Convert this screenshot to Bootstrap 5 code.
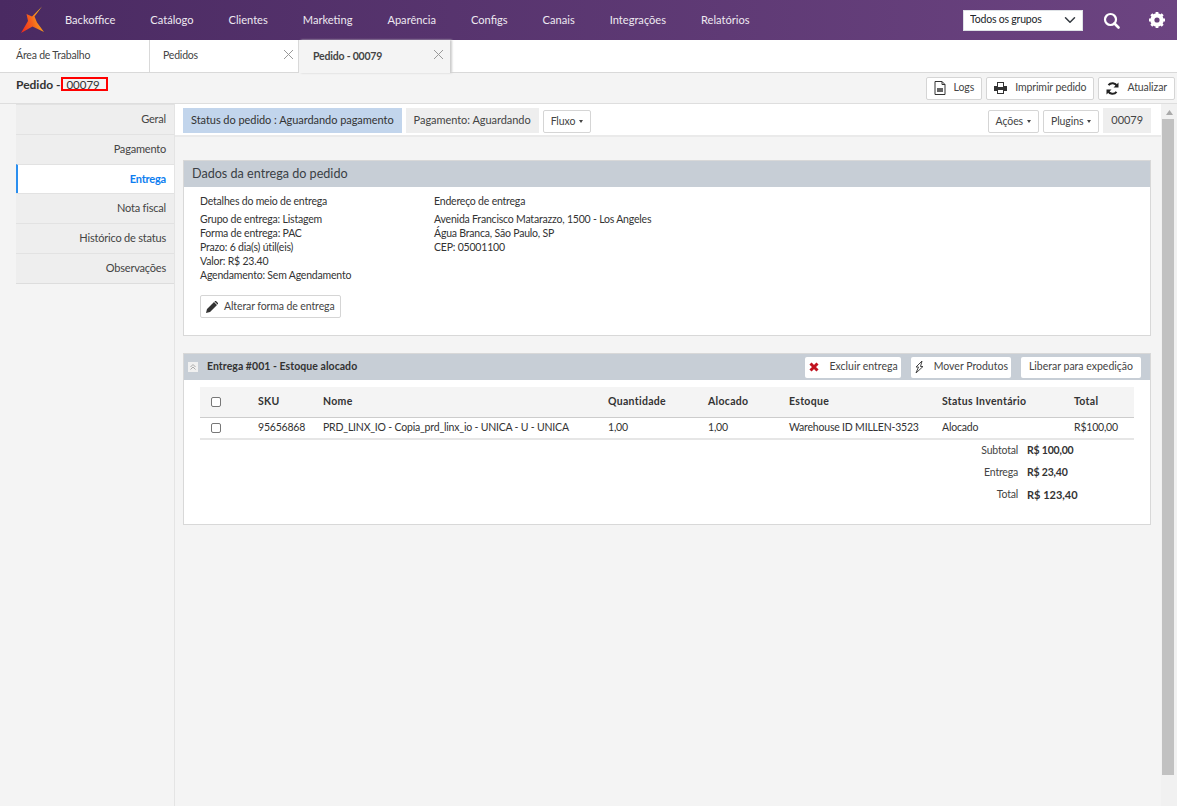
<!DOCTYPE html>
<html lang="pt-BR">

<head>
    <meta charset="UTF-8" />
    <meta name="viewport" content="width=device-width, initial-scale=1.0" />
    <link href="https://cdn.jsdelivr.net/npm/bootstrap@5.3.0/dist/css/bootstrap.min.css" rel="stylesheet">
    <title>Pedido - 00079</title>
    <style>
        html, body { height: 100%; overflow: hidden; }
        body { background: #f4f4f4; font-family: "Lato", "Noto Sans", sans-serif; font-size: 10.5px; letter-spacing: -.2px; color: #333; }
        .topo { height: 40px; background: linear-gradient(90deg, #4a2a62, #6c4481); color: #f1edf4; letter-spacing: 0; }
        .topo-logo { width: 65px; padding-left: 19px; }
        .topo-link { color: #eee9f1; font-size: 11.1px; text-decoration: none; margin-right: 35px; }
        .grupo-select { width: 120px; height: 21px; font-size: 10.5px; letter-spacing: -.2px; padding: 0 6px; border-radius: 0; background-position: right 4px center; margin-right: 20px; }
        .lupa { margin-right: 28px; }
        .engrenagem { margin-right: 11px; }
        .abas { height: 33px; background: #fff; border-bottom: 1px solid #d9d9d9; }
        .aba { width: 149px; height: 32px; padding: 0 13px; border-right: 1px solid #d9d9d9; position: relative; color: #444; }
        .aba-inicio { width: 150px; padding-left: 16px; }
        .aba-ativa { background: #f4f4f4; font-weight: 700; box-shadow: 2px 0 2px #ccc; height: 33px; border: 0; padding-left: 14px; width: 151px; }
        .aba-fechar { position: absolute; right: 4px; top: 9px; width: 11px; height: 11px; }
        .aba-ativa .aba-fechar { right: 6px; }
        .titulo-linha { height: 31px; padding: 0 2px 0 16px; border-bottom: 1px solid #dedede; }
        .titulo-txt { font-size: 12px; font-weight: 700; padding-bottom: 7px; letter-spacing: 0; }
        .marca-vermelha { border: 2px solid #f00; width: 47px; height: 14px; line-height: 12px; font-size: 11.5px; font-weight: 400; padding-left: 3px; display: inline-block; margin-left: -2px; }
        .btn-mini { background: #fff; border: 1px solid #d5d5d5; border-radius: 2px; font-size: 10.5px; letter-spacing: -.1px; color: #444; height: 23px; padding: 0 7px; display: inline-flex; align-items: center; gap: 8px; }
        .btn-alterar { padding: 0 5px; gap: 6px; }
        .corpo { height: 702px; }
        .lateral { width: 174px; padding-left: 16px; flex: none; }
        .lateral-lista { border-bottom: 1px solid #ddd; }
        .lateral-item { height: 29.8px; background: #eee; border-top: 1px solid #e2e2e2; text-align: right; padding-right: 8px; line-height: 28px; font-size: 11px; color: #444; }
        .lateral-item.sel { background: #fff; color: #0d7ef0; font-weight: 700; border-left: 2px solid #2b8fef; }
        .principal { border-left: 1px solid #e4e4e4; }
        .barra-acoes { height: 33px; background: #fff; border-bottom: 2px solid #eaeaea; padding: 4px 10px 0 8px; }
        .selo { height: 25px; padding: 0 8px; display: flex; align-items: center; font-size: 11px; letter-spacing: -.05px; color: #444; background: #eee; }
        .selo-azul { background: #c2d5ec; color: #333; }
        .btn-seta { margin-top: 2px; }
        .seta { width: 0; height: 0; border: 2px solid transparent; border-top: 3px solid #444; border-bottom: 0; }
        .painel { background: #fff; border: 1px solid #d8d8d8; margin: 0 10px 17px 8px; }
        .painel-entrega { margin-top: 23px; }
        .painel-topo { background: #c7ced6; height: 26px; padding: 0 9px 0 8px; }
        .painel-titulo { font-size: 12.6px; letter-spacing: 0; color: #3a3f45; }
        .titulo-entrega { letter-spacing: .05px; margin-left: 1px; }
        .dados-linha { line-height: 14px; padding: 7px 16px 0; }
        .dados-cab { margin-bottom: 4px; }
        .btn-area { padding: 13px 16px 17px; }
        .col-meio { width: 234px; }
        .btn-branco { background: #fff; border: 0; height: 21px; border-radius: 2px; font-size: 10.5px; letter-spacing: 0; color: #444; display: inline-flex; align-items: center; padding: 0 8px; }
        .btn-icone { padding: 0 3px 0 4px; }
        .btn-icone svg { margin-right: 11px; }
        .btn-mover svg { margin-right: 10px; }
        .grupo-btns { gap: 10px; }
        .tabela-pedido { width: 934px; margin: 7px 0 0 16px; }
        .tabela-pedido th, .tabela-pedido td { padding: 0; font-size: 10.5px; color: #333; }
        .tabela-pedido th { letter-spacing: .3px; }
        .tabela-pedido thead tr { height: 30px; background: #f4f4f4; border-bottom: 1px solid #ccc; }
        .tabela-pedido tbody tr { height: 22px; border-bottom: 2px solid #e6e6e6; }
        .caixinha { width: 10px; height: 10px; border: 1px solid #777; border-radius: 2px; display: block; margin-left: 11px; background: #fff; }
        .totais { width: 934px; margin-left: 16px; padding-bottom: 18px; }
        .totais-linha { height: 22px; align-items: center; }
        .totais-rot { width: 827px; text-align: right; padding-right: 9px; color: #444; }
        .total-forte { font-size: 11px; letter-spacing: 0; }
        .rolagem { width: 16px; flex: none; background: #f1f1f1; }
        .rolagem-seta { height: 15px; text-align: center; }
        .rolagem-polegar { height: 656px; background: #c1c1c1; width: 12px; margin-left: 1px; }
    </style>
</head>

<body>
    <!-- Barra do topo -->
    <nav class="topo d-flex align-items-center">
        <div class="topo-logo d-flex">
            <svg width="26" height="28" viewBox="18 5 26 28">
                <defs>
                    <linearGradient id="logoCor" x1="0" y1="1" x2="1" y2="0.6">
                        <stop offset="0" stop-color="#f0261e" />
                        <stop offset=".55" stop-color="#f5621c" />
                        <stop offset="1" stop-color="#f9b41c" />
                    </linearGradient>
                </defs>
                <path d="M41 5.5 L33.5 15.5 L36 21.5 L43 31 L31.5 25.5 L20 32 L27 20 L25.5 13 L31 15.5 Z" fill="url(#logoCor)" />
            </svg>
        </div>
        <a class="topo-link" href="#">Backoffice</a>
        <a class="topo-link" href="#">Catálogo</a>
        <a class="topo-link" href="#">Clientes</a>
        <a class="topo-link" href="#">Marketing</a>
        <a class="topo-link" href="#">Aparência</a>
        <a class="topo-link" href="#">Configs</a>
        <a class="topo-link" href="#">Canais</a>
        <a class="topo-link" href="#">Integrações</a>
        <a class="topo-link" href="#">Relatórios</a>
        <div class="ms-auto d-flex align-items-center">
            <select class="form-select grupo-select">
                <option>Todos os grupos</option>
            </select>
            <svg class="lupa" width="17" height="17" viewBox="0 0 17 17">
                <circle cx="7.5" cy="7.5" r="5.5" fill="none" stroke="#fff" stroke-width="2.2" />
                <path d="M11.5 11.5 L15.5 15.5" stroke="#fff" stroke-width="2.6" stroke-linecap="round" />
            </svg>
            <svg class="engrenagem" width="18" height="18" viewBox="0 0 18 18">
                <circle cx="9" cy="9" r="5" fill="none" stroke="#fff" stroke-width="3.4" />
                <path d="M9 1 V17 M1 9 H17 M3.3 3.3 L14.7 14.7 M14.7 3.3 L3.3 14.7" stroke="#fff" stroke-width="2.8" />
                <circle cx="9" cy="9" r="2.6" fill="#664079" />
            </svg>
        </div>
    </nav>

    <!-- Abas -->
    <div class="abas d-flex">
        <div class="aba aba-inicio d-flex align-items-center">Área de Trabalho</div>
        <div class="aba d-flex align-items-center">Pedidos
            <svg class="aba-fechar" viewBox="0 0 11 11"><path d="M1 1 L10 10 M10 1 L1 10" stroke="#999" /></svg>
        </div>
        <div class="aba aba-ativa d-flex align-items-center">Pedido - 00079
            <svg class="aba-fechar" viewBox="0 0 11 11"><path d="M1 1 L10 10 M10 1 L1 10" stroke="#999" /></svg>
        </div>
    </div>

    <!-- Titulo -->
    <div class="titulo-linha d-flex align-items-center">
        <div class="titulo-txt">Pedido - <span class="marca-vermelha">00079</span></div>
        <div class="ms-auto d-flex gap-1">
            <button class="btn-mini">
                <svg width="12" height="14" viewBox="0 0 12 14"><path d="M1 .5 H8 L11 3.5 V13.5 H1 Z M8 .5 V3.5 H11" fill="none" stroke="#333" /><path d="M3 7 H9 V11 H3 Z" fill="#666" /></svg>
                Logs
            </button>
            <button class="btn-mini">
                <svg width="13" height="12" viewBox="0 0 13 12"><path d="M3 0 H10 V4 H13 V9 H10 V12 H3 V9 H0 V4 H3 Z M4 1 V5 H9 V1 Z M4 8 V11 H9 V8 Z" fill="#333" fill-rule="evenodd" /></svg>
                Imprimir pedido
            </button>
            <button class="btn-mini">
                <svg width="13" height="13" viewBox="0 0 13 13"><path d="M11 4 A5 5 0 0 0 2.5 3.2 M2 9 A5 5 0 0 0 10.5 9.8" fill="none" stroke="#222" stroke-width="2" /><path d="M12.5 0.5 V5.5 H7.5 Z M0.5 12.5 V7.5 H5.5 Z" fill="#222" /></svg>
                Atualizar
            </button>
        </div>
    </div>

    <div class="corpo d-flex">
        <!-- Menu lateral -->
        <aside class="lateral">
            <div class="lateral-lista">
                <div class="lateral-item">Geral</div>
                <div class="lateral-item">Pagamento</div>
                <div class="lateral-item sel">Entrega</div>
                <div class="lateral-item">Nota fiscal</div>
                <div class="lateral-item">Histórico de status</div>
                <div class="lateral-item">Observações</div>
            </div>
        </aside>

        <main class="principal flex-grow-1">
            <div class="barra-acoes d-flex gap-1 align-items-start">
                <div class="selo selo-azul">Status do pedido : Aguardando pagamento</div>
                <div class="selo">Pagamento: Aguardando</div>
                <button class="btn-mini btn-seta gap-1">Fluxo <span class="seta"></span></button>
                <div class="ms-auto d-flex gap-1 align-items-start">
                    <button class="btn-mini btn-seta gap-1">Ações <span class="seta"></span></button>
                    <button class="btn-mini btn-seta gap-1">Plugins <span class="seta"></span></button>
                    <div class="selo">00079</div>
                </div>
            </div>

            <div class="painel painel-entrega">
                <div class="painel-topo d-flex align-items-center painel-titulo">Dados da entrega do pedido</div>
                <div class="d-flex dados-linha">
                    <div class="col-meio">
                        <div class="dados-cab">Detalhes do meio de entrega</div>
                        <div>Grupo de entrega: Listagem</div>
                        <div>Forma de entrega: PAC</div>
                        <div>Prazo: 6 dia(s) útil(eis)</div>
                        <div>Valor: R$ 23.40</div>
                        <div>Agendamento: Sem Agendamento</div>
                    </div>
                    <div>
                        <div class="dados-cab">Endereço de entrega</div>
                        <div>Avenida Francisco Matarazzo, 1500 - Los Angeles</div>
                        <div>Água Branca, São Paulo, SP</div>
                        <div>CEP: 05001100</div>
                    </div>
                </div>
                <div class="btn-area">
                    <button class="btn-mini btn-alterar">
                        <svg width="12" height="12" viewBox="0 0 12 12"><path d="M0 12 L1 8 L8 1 L11 4 L4 11 Z M9 0 L10 0 L12 2 L12 3 L11.5 3.5 L8.5 .5 Z" fill="#333" /></svg>
                        Alterar forma de entrega
                    </button>
                </div>
            </div>

            <div class="painel mb-0">
                <div class="painel-topo d-flex align-items-center ps-1">
                    <span class="d-flex me-2">
                        <svg width="10" height="10" viewBox="0 0 10 10"><rect width="10" height="10" fill="#f0f0f0" /><path d="M2.5 5 L5 2.5 L7.5 5 M2.5 7.5 L5 5 L7.5 7.5" fill="none" stroke="#aaa" /></svg>
                    </span>
                    <strong class="titulo-entrega">Entrega #001 - Estoque alocado</strong>
                    <div class="ms-auto d-flex grupo-btns">
                        <button class="btn-branco btn-icone">
                            <svg width="10" height="10" viewBox="0 0 10 10"><path d="M1.5 1.5 L8.5 8.5 M8.5 1.5 L1.5 8.5" stroke="#c1121f" stroke-width="3" /></svg>
                            Excluir entrega
                        </button>
                        <button class="btn-branco btn-icone btn-mover">
                            <svg width="9" height="12" viewBox="0 0 9 12"><path d="M7 0 L1 6 L3.5 6 L1 12 L8 5.5 L5.5 5.5 Z" fill="none" stroke="#444" /></svg>
                            Mover Produtos
                        </button>
                        <button class="btn-branco">Liberar para expedição</button>
                    </div>
                </div>
                <table class="tabela-pedido">
                    <thead>
                        <tr>
                            <th style="width:58px"><span class="caixinha"></span></th>
                            <th style="width:65px">SKU</th>
                            <th style="width:285px">Nome</th>
                            <th style="width:100px">Quantidade</th>
                            <th style="width:81px">Alocado</th>
                            <th style="width:153px">Estoque</th>
                            <th style="width:132px">Status Inventário</th>
                            <th>Total</th>
                        </tr>
                    </thead>
                    <tbody>
                        <tr>
                            <td><span class="caixinha"></span></td>
                            <td>95656868</td>
                            <td>PRD_LINX_IO - Copia_prd_linx_io - UNICA - U - UNICA</td>
                            <td>1,00</td>
                            <td>1,00</td>
                            <td>Warehouse ID MILLEN-3523</td>
                            <td>Alocado</td>
                            <td>R$100,00</td>
                        </tr>
                    </tbody>
                </table>
                <div class="totais">
                    <div class="totais-linha d-flex"><div class="totais-rot">Subtotal</div><strong>R$ 100,00</strong></div>
                    <div class="totais-linha d-flex"><div class="totais-rot">Entrega</div><strong>R$ 23,40</strong></div>
                    <div class="totais-linha d-flex"><div class="totais-rot">Total</div><strong class="total-forte">R$ 123,40</strong></div>
                </div>
            </div>
        </main>

        <div class="rolagem">
            <div class="rolagem-seta"><svg width="7" height="5" viewBox="0 0 7 5"><path d="M0 5 L3.5 0 L7 5 Z" fill="#aaa" /></svg></div>
            <div class="rolagem-polegar"></div>
        </div>
    </div>

    <script src="https://cdn.jsdelivr.net/npm/bootstrap@5.3.0/dist/js/bootstrap.bundle.min.js"></script>
</body>

</html>
